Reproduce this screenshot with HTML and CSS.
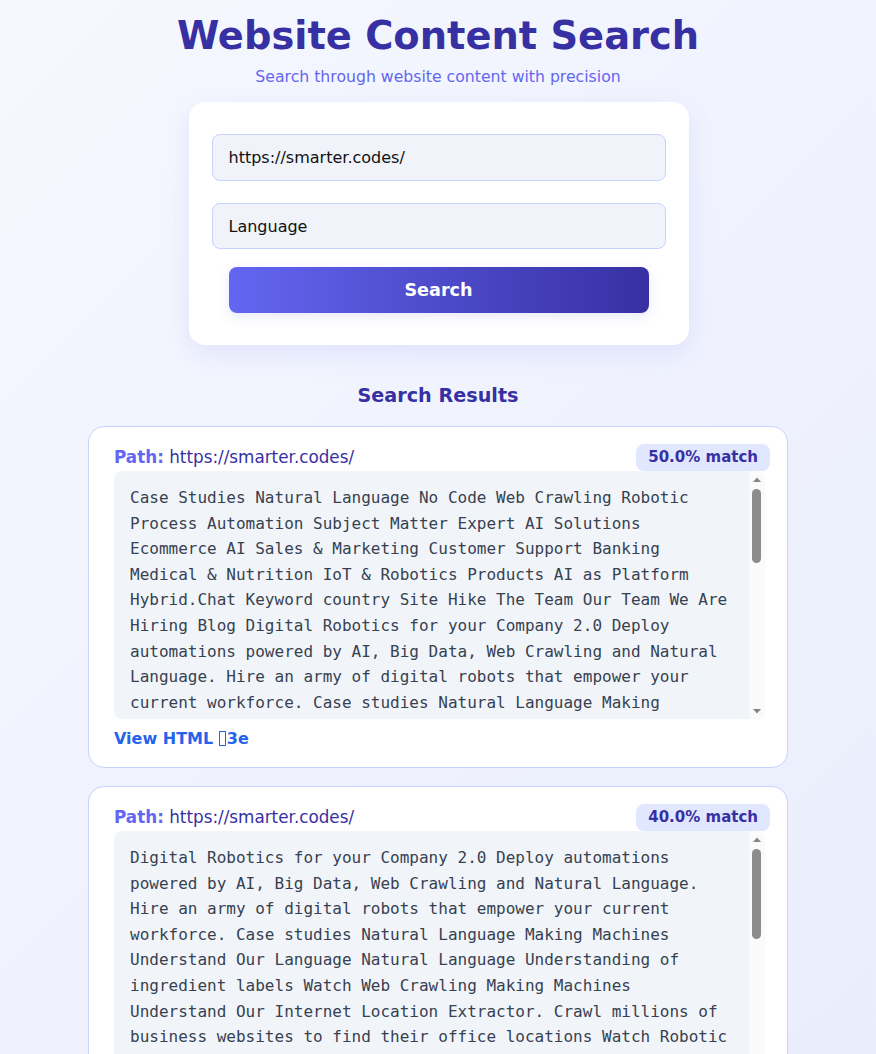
FILE: index.html
```html
<!DOCTYPE html>
<html lang="en">
<head>
<meta charset="utf-8">
<title>Website Content Search</title>
<link rel="stylesheet" href="styles.css">
</head>
<body>
<main class="page">
  <header class="hero">
    <h1 class="title">Website Content Search</h1>
    <p class="subtitle">Search through website content with precision</p>
  </header>

  <form class="search-card">
    <input class="field" type="text" value="https://smarter.codes/">
    <input class="field" type="text" value="Language">
    <button class="search-btn" type="button">Search</button>
  </form>

  <section class="results">
    <h2 class="results-title">Search Results</h2>

    <article class="result">
      <span class="badge">50.0% match</span>
      <div class="path"><span class="path-label">Path:</span> https://smarter.codes/</div>
      <div class="content-box">
        <pre class="content">Case Studies Natural Language No Code Web Crawling Robotic Process Automation Subject Matter Expert AI Solutions Ecommerce AI Sales &amp; Marketing Customer Support Banking Medical &amp; Nutrition IoT &amp; Robotics Products AI as Platform Hybrid.Chat Keyword country Site Hike The Team Our Team We Are Hiring Blog Digital Robotics for your Company 2.0 Deploy automations powered by AI, Big Data, Web Crawling and Natural Language. Hire an army of digital robots that empower your current workforce. Case studies Natural Language Making Machines Understand Our Language Natural Language Understanding of ingredient labels Watch Web Crawling Making Machines Understand Our Internet Location Extractor. Crawl millions of business websites to find their office locations Watch Robotic Process Automation Making Machines do repetitive tasks Automated invoice processing for accounting teams Watch Subject Matter Expert AI Making Machines learn from your experts Knowledge capture for customer support teams Watch Our Clients Trusted by companies around the world Get in touch with our team today to start your automation journey Contact Us Privacy Policy Terms of Service</pre>
        <div class="scrollbar" aria-hidden="true">
          <div class="sb-btn"><svg width="8" height="5" viewBox="0 0 8 5"><path d="M0 5 L4 0.5 L8 5 Z" fill="#858585"/></svg></div>
          <div class="sb-track"><div class="sb-thumb" style="height: 74px"></div></div>
          <div class="sb-btn"><svg width="8" height="5" viewBox="0 0 8 5"><path d="M0 0 L8 0 L4 4.5 Z" fill="#858585"/></svg></div>
        </div>
      </div>
      <a class="view-link" href="#">View HTML <span class="tofu" aria-hidden="true"></span>3e</a>
    </article>

    <article class="result">
      <span class="badge">40.0% match</span>
      <div class="path"><span class="path-label">Path:</span> https://smarter.codes/</div>
      <div class="content-box">
        <pre class="content">Digital Robotics for your Company 2.0 Deploy automations powered by AI, Big Data, Web Crawling and Natural Language. Hire an army of digital robots that empower your current workforce. Case studies Natural Language Making Machines Understand Our Language Natural Language Understanding of ingredient labels Watch Web Crawling Making Machines Understand Our Internet Location Extractor. Crawl millions of business websites to find their office locations Watch Robotic Process Automation Making Machines do repetitive tasks Automated invoice processing for accounting teams Watch Subject Matter Expert AI Making Machines learn from your experts Knowledge capture for customer support teams</pre>
        <div class="scrollbar" aria-hidden="true">
          <div class="sb-btn"><svg width="8" height="5" viewBox="0 0 8 5"><path d="M0 5 L4 0.5 L8 5 Z" fill="#858585"/></svg></div>
          <div class="sb-track"><div class="sb-thumb" style="height: 90px"></div></div>
          <div class="sb-btn"><svg width="8" height="5" viewBox="0 0 8 5"><path d="M0 0 L8 0 L4 4.5 Z" fill="#858585"/></svg></div>
        </div>
      </div>
      <a class="view-link" href="#">View HTML <span class="tofu" aria-hidden="true"></span>3e</a>
    </article>
  </section>
</main>
</body>
</html>
```

FILE: styles.css
```css
* {
  box-sizing: border-box;
}

html, body {
  margin: 0;
  padding: 0;
}

body {
  font-family: "DejaVu Sans", sans-serif;
  background: linear-gradient(135deg, #f6f8ff 0%, #e9edfc 100%);
  min-height: 100vh;
  color: #1f2937;
}

.page {
  padding: 13px 0 40px;
  display: flex;
  flex-direction: column;
  align-items: center;
}

.hero {
  text-align: center;
}

.title {
  margin: 0;
  font-size: 38.4px;
  line-height: 1.2;
  font-weight: 700;
  color: #3730a3;
}

.subtitle {
  margin: 7px 0 0;
  font-size: 15.7px;
  line-height: 1.4;
  color: #6366f1;
}

.search-card {
  width: 500px;
  margin: 14px 0 0 1px;
  background: #ffffff;
  border-radius: 16px;
  padding: 32px 23px;
  box-shadow: 0 8px 28px rgba(99, 102, 241, 0.12);
  display: flex;
  flex-direction: column;
  align-items: stretch;
}

.field {
  display: block;
  width: 100%;
  height: 47px;
  padding: 0 16px;
  font-family: "DejaVu Sans", sans-serif;
  font-size: 16px;
  color: #111111;
  background: #f0f3f9;
  border: 1px solid #c7d2fe;
  border-radius: 8px;
  outline: none;
}

.field + .field {
  margin-top: 22px;
  height: 46px;
}

.search-btn {
  margin: 18px 17px 0;
  height: 46px;
  border: none;
  border-radius: 8px;
  background: linear-gradient(90deg, #6366f1 0%, #3730a3 100%);
  color: #ffffff;
  font-family: "DejaVu Sans", sans-serif;
  font-size: 17.6px;
  font-weight: 700;
  box-shadow: 0 4px 12px rgba(99, 102, 241, 0.15);
  cursor: pointer;
}

.results {
  width: 700px;
  margin-top: 39px;
  display: flex;
  flex-direction: column;
  gap: 18px;
}

.results-title {
  margin: 0 0 0;
  text-align: center;
  font-size: 19.2px;
  line-height: 24px;
  font-weight: 700;
  color: #3730a3;
}

.result {
  position: relative;
  background: #ffffff;
  border: 1px solid #c7d2fe;
  border-radius: 16px;
  padding: 18px 22px 18px 25px;
  display: flex;
  flex-direction: column;
  align-items: flex-start;
}

.badge {
  position: absolute;
  top: 17px;
  right: 17px;
  padding: 4px 12px;
  font-size: 15px;
  line-height: 19px;
  font-weight: 700;
  color: #3730a3;
  background: #e0e7ff;
  border-radius: 8px;
}

.path {
  font-size: 16.8px;
  line-height: 24px;
  color: #3730a3;
  margin-bottom: 2px;
}

.path-label {
  font-weight: 700;
  color: #6366f1;
}

.content-box {
  align-self: stretch;
  display: flex;
  height: 248px;
  border-radius: 8px;
  overflow: hidden;
}

.content {
  flex: 1;
  min-width: 0;
  margin: 0;
  overflow: hidden;
  padding: 14px 16px 12px;
  background: #f1f5f9;
  font-family: "DejaVu Sans Mono", monospace;
  font-size: 16px;
  line-height: 1.6;
  color: #374151;
  white-space: pre-wrap;
  word-wrap: break-word;
}

.scrollbar {
  flex: 0 0 16px;
  display: flex;
  flex-direction: column;
  background: #fafafa;
}

.sb-btn {
  height: 16px;
  display: flex;
  align-items: center;
  justify-content: center;
}

.sb-track {
  flex: 1;
  padding: 2px 4px 0 3px;
}

.sb-thumb {
  width: 9px;
  border-radius: 5px;
  background: #8c8c8c;
}

.view-link {
  margin-top: 10px;
  font-size: 16px;
  line-height: 20px;
  font-weight: 700;
  color: #2563eb;
  text-decoration: none;
}

.tofu {
  display: inline-block;
  width: 7px;
  height: 15px;
  border: 1px solid currentColor;
  vertical-align: -2px;
  margin-right: 1px;
}
```
